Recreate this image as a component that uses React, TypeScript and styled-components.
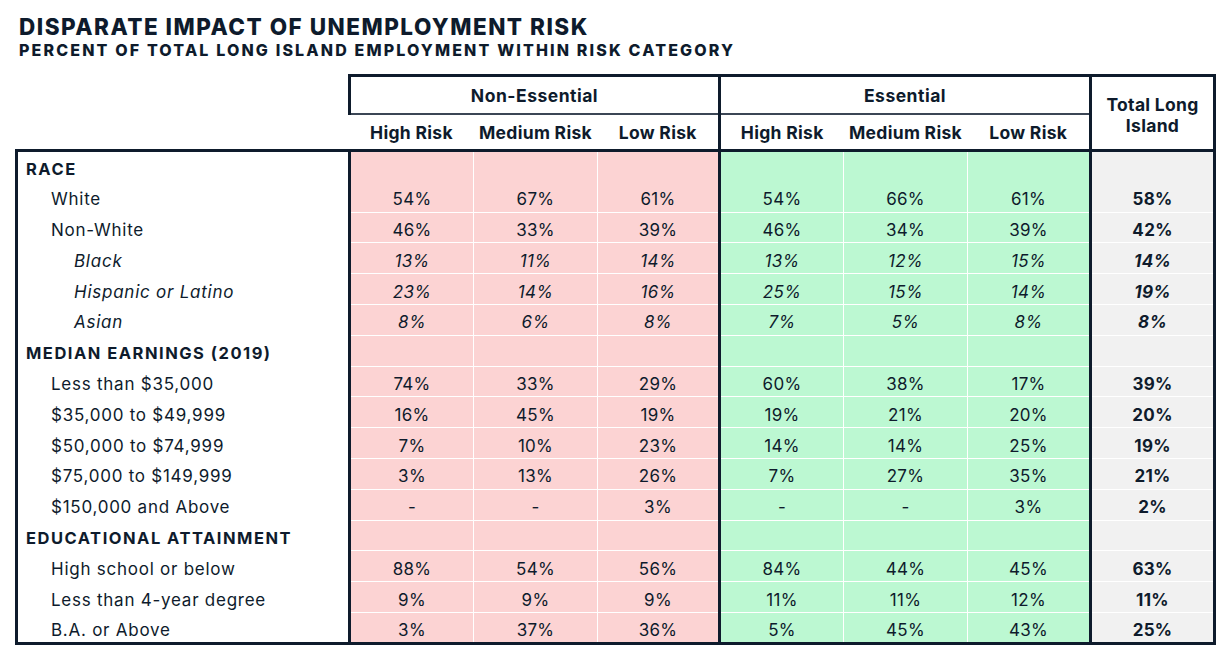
import React from "react";
import styled, { createGlobalStyle } from "styled-components";

const NAVY = "#0e1b2c";
const LINE = "3px solid #0e1b2c";

const Global = createGlobalStyle`
  html, body { margin: 0; padding: 0; background: #ffffff; }
  body { font-family: Inter, "Noto Sans", "DejaVu Sans", sans-serif; color: ${NAVY}; }
`;

const Page = styled.div`
  width: 1231px;
  height: 652px;
  box-sizing: border-box;
  padding: 14px 0 0 15px;
  overflow: hidden;
`;

const Title = styled.h1`
  margin: 0 0 0 4px;
  font-size: 22.5px;
  font-weight: 800;
  line-height: 26px;
  letter-spacing: 1.5px;
  white-space: nowrap;
`;

const Subtitle = styled.h2`
  margin: 0 0 0 4px;
  font-size: 16px;
  font-weight: 800;
  line-height: 20px;
  letter-spacing: 2.15px;
  white-space: nowrap;
`;

const Table = styled.table`
  margin-top: 14px;
  border-collapse: collapse;
  table-layout: fixed;
  width: 1198px;
`;

const Corner = styled.th`
  border: none;
  padding: 0;
`;

const GroupHead = styled.th`
  height: 36px;
  padding: 0;
  border-top: ${LINE};
  border-left: ${LINE};
  border-right: ${LINE};
  border-bottom: 2px solid #3b4655;
  font-size: 17.5px;
  font-weight: 700;
  letter-spacing: 0.5px;
  text-align: center;
  vertical-align: middle;
`;

const TotalHead = styled.th`
  padding: 4px 0 0;
  border: ${LINE};
  font-size: 17.5px;
  font-weight: 700;
  letter-spacing: 0.3px;
  line-height: 21px;
  text-align: center;
  vertical-align: middle;
`;

const SubHead = styled.th<{ $edge?: boolean }>`
  height: 34px;
  padding: 0;
  border-bottom: ${LINE};
  border-right: ${(p) => (p.$edge ? LINE : "none")};
  font-size: 17.5px;
  font-weight: 700;
  letter-spacing: 0.3px;
  text-align: center;
  vertical-align: middle;
  white-space: nowrap;
`;

const Row = styled.tr`
  height: 30.8px;
`;

const Label = styled.td<{ $level: 0 | 1 | 2; $first?: boolean; $last?: boolean }>`
  padding: 5px 0 0 ${(p) => (p.$level === 0 ? 8 : p.$level === 1 ? 33 : 56)}px;
  border-left: ${LINE};
  border-right: ${LINE};
  border-top: ${(p) => (p.$first ? LINE : "none")};
  border-bottom: ${(p) => (p.$last ? LINE : "none")};
  font-size: ${(p) => (p.$level === 0 ? "16.5px" : "17px")};
  font-weight: ${(p) => (p.$level === 0 ? 700 : 400)};
  font-style: ${(p) => (p.$level === 2 ? "italic" : "normal")};
  letter-spacing: ${(p) => (p.$level === 0 ? "1.5px" : "0.75px")};
  line-height: 20px;
  white-space: nowrap;
  vertical-align: middle;
`;

const TONES = { pink: "#fcd3d3", green: "#bcf8d2", gray: "#f1f1f1" };

const Cell = styled.td<{
  $tone: keyof typeof TONES;
  $edge?: boolean;
  $italic?: boolean;
  $bold?: boolean;
  $first?: boolean;
  $last?: boolean;
  $joinDown?: boolean;
  $joinUp?: boolean;
}>`
  padding: 5px 0 0;
  line-height: 20px;
  background: ${(p) => TONES[p.$tone]};
  text-align: center;
  vertical-align: middle;
  font-size: 17px;
  letter-spacing: 0.3px;
  font-weight: ${(p) => (p.$bold ? 700 : 400)};
  font-style: ${(p) => (p.$italic ? "italic" : "normal")};
  border-right: ${(p) => (p.$edge ? LINE : "1px solid #ffffff")};
  border-top: ${(p) => (p.$first ? LINE : p.$joinUp ? "none" : "1px solid #ffffff")};
  border-bottom: ${(p) => (p.$last ? LINE : p.$joinDown ? "none" : "1px solid #ffffff")};
`;

type Line = {
  label: string;
  level: 0 | 1 | 2;
  values?: string[];
  total?: string;
};

const DATA: Line[] = [
  { label: "RACE", level: 0 },
  { label: "White", level: 1, values: ["54%", "67%", "61%", "54%", "66%", "61%"], total: "58%" },
  { label: "Non-White", level: 1, values: ["46%", "33%", "39%", "46%", "34%", "39%"], total: "42%" },
  { label: "Black", level: 2, values: ["13%", "11%", "14%", "13%", "12%", "15%"], total: "14%" },
  { label: "Hispanic or Latino", level: 2, values: ["23%", "14%", "16%", "25%", "15%", "14%"], total: "19%" },
  { label: "Asian", level: 2, values: ["8%", "6%", "8%", "7%", "5%", "8%"], total: "8%" },
  { label: "MEDIAN EARNINGS (2019)", level: 0 },
  { label: "Less than $35,000", level: 1, values: ["74%", "33%", "29%", "60%", "38%", "17%"], total: "39%" },
  { label: "$35,000 to $49,999", level: 1, values: ["16%", "45%", "19%", "19%", "21%", "20%"], total: "20%" },
  { label: "$50,000 to $74,999", level: 1, values: ["7%", "10%", "23%", "14%", "14%", "25%"], total: "19%" },
  { label: "$75,000 to $149,999", level: 1, values: ["3%", "13%", "26%", "7%", "27%", "35%"], total: "21%" },
  { label: "$150,000 and Above", level: 1, values: ["-", "-", "3%", "-", "-", "3%"], total: "2%" },
  { label: "EDUCATIONAL ATTAINMENT", level: 0 },
  { label: "High school or below", level: 1, values: ["88%", "54%", "56%", "84%", "44%", "45%"], total: "63%" },
  { label: "Less than 4-year degree", level: 1, values: ["9%", "9%", "9%", "11%", "11%", "12%"], total: "11%" },
  { label: "B.A. or Above", level: 1, values: ["3%", "37%", "36%", "5%", "45%", "43%"], total: "25%" },
];

const RISKS = ["High Risk", "Medium Risk", "Low Risk"];
const WIDTHS = [333, 124, 124, 122, 124, 124, 123, 124];

export default function App() {
  return (
    <Page>
      <Global />
      <Title>DISPARATE IMPACT OF UNEMPLOYMENT RISK</Title>
      <Subtitle>PERCENT OF TOTAL LONG ISLAND EMPLOYMENT WITHIN RISK CATEGORY</Subtitle>
      <Table>
        <colgroup>
          {WIDTHS.map((w, i) => (
            <col key={i} style={{ width: w }} />
          ))}
        </colgroup>
        <thead>
          <tr>
            <Corner rowSpan={2} />
            <GroupHead colSpan={3}>Non-Essential</GroupHead>
            <GroupHead colSpan={3}>Essential</GroupHead>
            <TotalHead rowSpan={2}>
              Total Long
              <br />
              Island
            </TotalHead>
          </tr>
          <tr>
            {[0, 1].map((g) =>
              RISKS.map((r, i) => (
                <SubHead key={`${g}-${i}`} $edge={i === 2}>
                  {r}
                </SubHead>
              ))
            )}
          </tr>
        </thead>
        <tbody>
          {DATA.map((row, ri) => {
            const first = ri === 0;
            const last = ri === DATA.length - 1;
            const joinDown = ri === 0;
            const joinUp = ri === 1;
            const italic = row.level === 2;
            const vals = row.values ?? ["", "", "", "", "", ""];
            return (
              <Row key={row.label}>
                <Label $level={row.level} $first={first} $last={last}>
                  {row.label}
                </Label>
                {vals.map((v, ci) => (
                  <Cell
                    key={ci}
                    $tone={ci < 3 ? "pink" : "green"}
                    $edge={ci === 2 || ci === 5}
                    $italic={italic}
                    $first={first}
                    $last={last}
                    $joinDown={joinDown}
                    $joinUp={joinUp}
                  >
                    {v}
                  </Cell>
                ))}
                <Cell
                  $tone="gray"
                  $edge
                  $bold
                  $italic={italic}
                  $first={first}
                  $last={last}
                  $joinDown={joinDown}
                  $joinUp={joinUp}
                >
                  {row.total ?? ""}
                </Cell>
              </Row>
            );
          })}
        </tbody>
      </Table>
    </Page>
  );
}
